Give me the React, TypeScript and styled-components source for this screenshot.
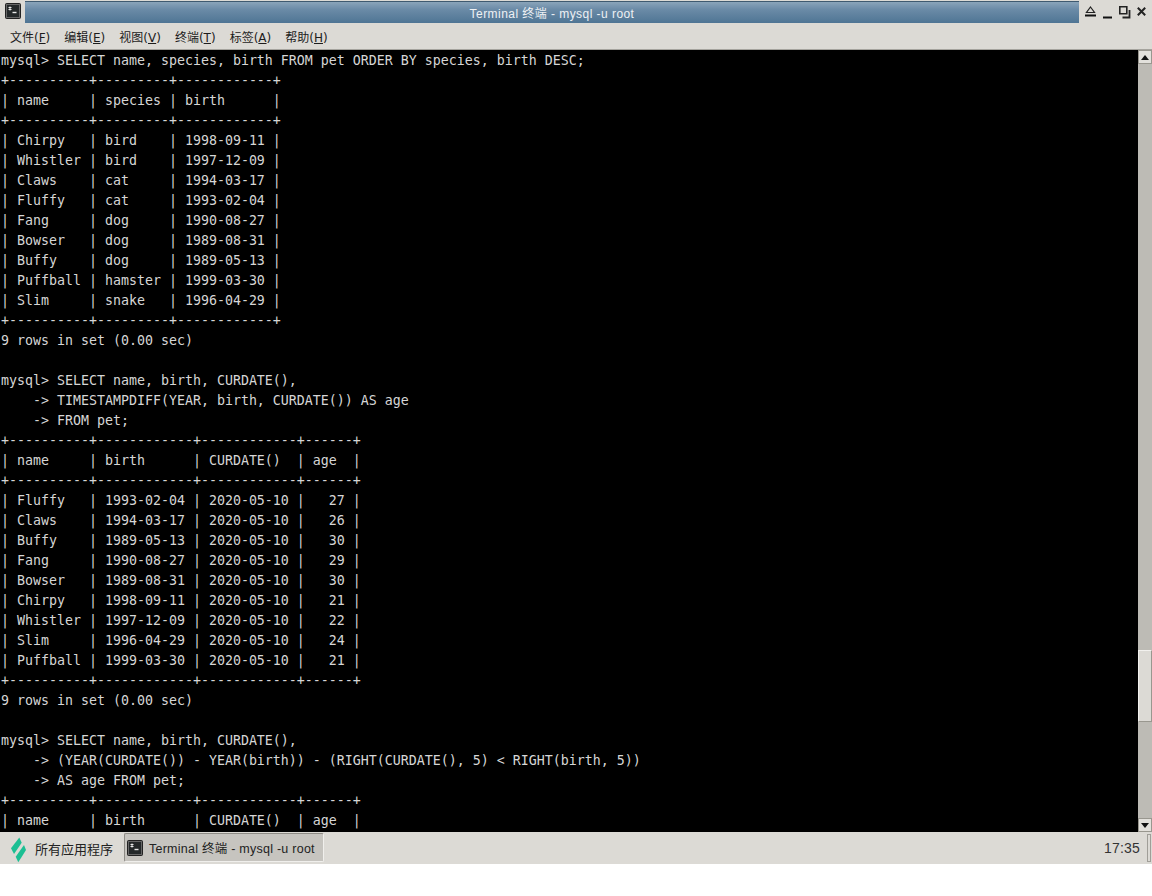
import React from "react";
import styled, { createGlobalStyle } from "styled-components";

const Global = createGlobalStyle`
  html, body { margin: 0; padding: 0; background: #fff; }
  #root { width: 1152px; height: 896px; overflow: hidden; }
`;

const Screen = styled.div`
  width: 1152px;
  height: 896px;
  display: flex;
  flex-direction: column;
  background: #fff;
  font-family: "Liberation Sans", "Noto Sans CJK SC", sans-serif;
`;

const TitleBar = styled.div`
  height: 23px;
  flex: none;
  display: flex;
  align-items: stretch;
  background: #dcdad5;
`;

const WinIconBox = styled.div`
  width: 25px;
  flex: none;
  display: flex;
  align-items: center;
  justify-content: center;
  padding-bottom: 1px;
`;

const TitleCenter = styled.div`
  flex: 1;
  display: flex;
  align-items: center;
  justify-content: center;
  margin-top: 1px;
  color: #eef1f4;
  font-size: 12px;
  letter-spacing: 0.45px;
  background: linear-gradient(#8aa4ba 0%, #6b8ba7 35%, #4f7594 100%);
  border-top: 1px solid #3f5a70;
`;

const WinButtons = styled.div`
  width: 73px;
  flex: none;
  display: flex;
  align-items: center;
  gap: 7px;
  padding-left: 6px;
  box-sizing: border-box;
  background: #dcdad5;
`;

const MenuBar = styled.div`
  height: 27px;
  flex: none;
  box-sizing: border-box;
  display: flex;
  align-items: center;
  gap: 14px;
  padding: 0 0 0 10px;
  background: #dcdad5;
  border-bottom: 1px solid #a5a39d;
  font-family: "DejaVu Sans", "Noto Sans CJK SC", sans-serif;
  font-size: 12px;
  color: #1c1c1c;
`;

const MenuItem = styled.span`
  white-space: nowrap;
  u { text-decoration: underline; }
  small { font-size: 12px; }
`;

const Main = styled.div`
  flex: 1;
  min-height: 0;
  display: flex;
  background: #000;
`;

const Term = styled.pre`
  flex: 1;
  margin: 0;
  padding: 1px 0 0 1px;
  overflow: hidden;
  background: #000;
  color: #d6d6d6;
  font-family: "DejaVu Sans Mono", monospace;
  font-size: 13.29px;
  line-height: 20px;
  opacity: 0.999;
`;

const Scrollbar = styled.div`
  width: 14px;
  flex: none;
  display: flex;
  flex-direction: column;
  background: #bdbbb5;
`;

const Arrow = styled.div`
  height: 14px;
  flex: none;
  box-sizing: border-box;
  display: flex;
  align-items: center;
  justify-content: center;
  background: #e2e0db;
  border: 1px solid #99978f;
`;

const Track = styled.div`
  flex: 1;
  display: flex;
  flex-direction: column;
  padding-top: 586px;
`;

const Thumb = styled.div`
  height: 72px;
  box-sizing: border-box;
  background: #dcdad5;
  border: 1px solid #f2f1ee;
  border-right-color: #99978f;
  border-bottom-color: #99978f;
`;

const Taskbar = styled.div`
  height: 32px;
  flex: none;
  display: flex;
  align-items: center;
  background: #dcdad5;
  font-size: 12.5px;
  color: #222;
`;

const AppMenu = styled.div`
  width: 124px;
  flex: none;
  display: flex;
  align-items: center;
  gap: 9px;
  padding-left: 10px;
  box-sizing: border-box;
  font-family: "Noto Sans CJK SC", sans-serif;
  font-size: 13px;
  svg { margin-top: 3px; }
`;

const TaskButton = styled.div`
  width: 200px;
  height: 29px;
  flex: none;
  box-sizing: border-box;
  display: flex;
  align-items: center;
  gap: 6px;
  padding-left: 2px;
  margin-bottom: 1px;
  background: #c6c4bf;
  border: 1px solid #8d8b85;
  border-right-color: #f0efec;
  border-bottom-color: #f0efec;
  border-radius: 2px;
  letter-spacing: 0.25px;
`;

const Clock = styled.div`
  margin-left: auto;
  padding-right: 7px;
  font-size: 14px;
  letter-spacing: 0.2px;
  color: #333;
`;

const Grip = styled.div`
  width: 2px;
  height: 26px;
  flex: none;
  margin-right: 1px;
  border: 1px solid #a09e98;
`;

const BottomGap = styled.div`
  height: 32px;
  flex: none;
  background: #fff;
`;

const TermIcon: React.FC<{ size: number }> = ({ size }) => (
  <svg width={size} height={size} viewBox="0 0 16 16">
    <rect x="0.5" y="0.5" width="15" height="15" rx="1" fill="#2b2e2f" stroke="#222" />
    <rect x="1.5" y="1.5" width="13" height="13" fill="#242829" stroke="#666" />
    <path d="M3.5 4.5h3M3.5 6.5h3M5 3.5v4" stroke="#e8e8e8" strokeWidth="1" />
    <path d="M7.5 9.5h4" stroke="#e8e8e8" strokeWidth="1.4" />
  </svg>
);

const terminal = `mysql> SELECT name, species, birth FROM pet ORDER BY species, birth DESC;
+----------+---------+------------+
| name     | species | birth      |
+----------+---------+------------+
| Chirpy   | bird    | 1998-09-11 |
| Whistler | bird    | 1997-12-09 |
| Claws    | cat     | 1994-03-17 |
| Fluffy   | cat     | 1993-02-04 |
| Fang     | dog     | 1990-08-27 |
| Bowser   | dog     | 1989-08-31 |
| Buffy    | dog     | 1989-05-13 |
| Puffball | hamster | 1999-03-30 |
| Slim     | snake   | 1996-04-29 |
+----------+---------+------------+
9 rows in set (0.00 sec)

mysql> SELECT name, birth, CURDATE(),
    -> TIMESTAMPDIFF(YEAR, birth, CURDATE()) AS age
    -> FROM pet;
+----------+------------+------------+------+
| name     | birth      | CURDATE()  | age  |
+----------+------------+------------+------+
| Fluffy   | 1993-02-04 | 2020-05-10 |   27 |
| Claws    | 1994-03-17 | 2020-05-10 |   26 |
| Buffy    | 1989-05-13 | 2020-05-10 |   30 |
| Fang     | 1990-08-27 | 2020-05-10 |   29 |
| Bowser   | 1989-08-31 | 2020-05-10 |   30 |
| Chirpy   | 1998-09-11 | 2020-05-10 |   21 |
| Whistler | 1997-12-09 | 2020-05-10 |   22 |
| Slim     | 1996-04-29 | 2020-05-10 |   24 |
| Puffball | 1999-03-30 | 2020-05-10 |   21 |
+----------+------------+------------+------+
9 rows in set (0.00 sec)

mysql> SELECT name, birth, CURDATE(),
    -> (YEAR(CURDATE()) - YEAR(birth)) - (RIGHT(CURDATE(), 5) < RIGHT(birth, 5))
    -> AS age FROM pet;
+----------+------------+------------+------+
| name     | birth      | CURDATE()  | age  |`;

const menus: [string, string][] = [
  ["文件", "F"],
  ["编辑", "E"],
  ["视图", "V"],
  ["终端", "T"],
  ["标签", "A"],
  ["帮助", "H"],
];

export default function App() {
  return (
    <Screen>
      <Global />
      <TitleBar>
        <WinIconBox>
          <TermIcon size={16} />
        </WinIconBox>
        <TitleCenter>Terminal 终端 - mysql -u root</TitleCenter>
        <WinButtons>
          <svg width="11" height="11" viewBox="0 0 11 11">
            <path d="M5.5 1 9.5 6.5H1.5Z" fill="none" stroke="#222" strokeWidth="1.2" />
            <path d="M0 9.5h11" stroke="#111" strokeWidth="2" />
          </svg>
          <svg width="9" height="11" viewBox="0 0 9 11" style={{ marginTop: 6 }}>
            <path d="M0 8.5h9" stroke="#111" strokeWidth="2" />
          </svg>
          <svg width="11" height="12" viewBox="0 0 11 12" overflow="visible">
            <path d="M.8.8h7v7h-7Z" fill="none" stroke="#222" strokeWidth="1.6" />
            <path d="M10.5 4v7.5H3.5" fill="none" stroke="#222" strokeWidth="1.8" />
          </svg>
          <svg width="9" height="9" viewBox="0 0 9 9">
            <path d="M.8.8 8.2 8.2M8.2.8 .8 8.2" stroke="#222" strokeWidth="2" />
          </svg>
        </WinButtons>
      </TitleBar>
      <MenuBar>
        {menus.map(([label, key]) => (
          <MenuItem key={key}>
            {label}
            <small>
              (<u>{key}</u>)
            </small>
          </MenuItem>
        ))}
      </MenuBar>
      <Main>
        <Term>{terminal}</Term>
        <Scrollbar>
          <Arrow>
            <svg width="8" height="5" viewBox="0 0 8 5">
              <path d="M4 0 8 5H0Z" fill="#111" />
            </svg>
          </Arrow>
          <Track>
            <Thumb />
          </Track>
          <Arrow>
            <svg width="8" height="5" viewBox="0 0 8 5">
              <path d="M0 0H8L4 5Z" fill="#111" />
            </svg>
          </Arrow>
        </Scrollbar>
      </Main>
      <Taskbar>
        <AppMenu>
          <svg width="16" height="26" viewBox="0 0 16 26">
            <path d="M9.3.6 11.7 5.7 4 17 1 11.3Z" fill="#1cbf93" />
            <path d="M14 8 16 13 8.3 25.3 5.7 19.7Z" fill="#1cbf93" />
          </svg>
          所有应用程序
        </AppMenu>
        <TaskButton>
          <TermIcon size={16} />
          Terminal 终端 - mysql -u root
        </TaskButton>
        <Clock>17:35</Clock>
        <Grip />
      </Taskbar>
      <BottomGap />
    </Screen>
  );
}
